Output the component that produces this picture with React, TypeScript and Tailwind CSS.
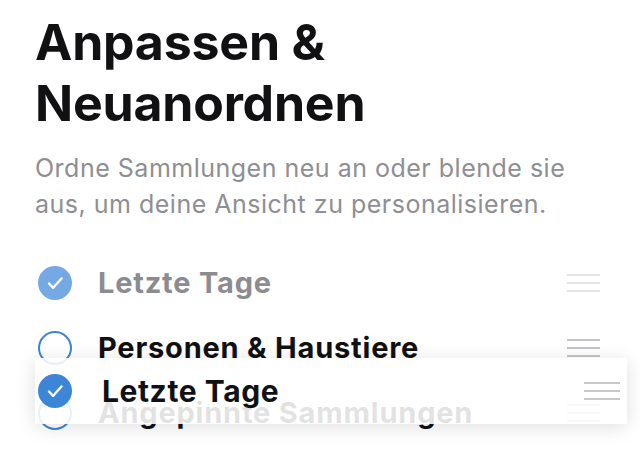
function Check({ faded }: { faded?: boolean }) {
  return (
    <span
      className={`flex h-[34px] w-[34px] shrink-0 items-center justify-center rounded-full ${
        faded ? "bg-[#74a9e4]" : "bg-[#3d85d6]"
      }`}
    >
      <svg viewBox="0 0 34 34" className="h-[34px] w-[34px]">
        <path d="M11 17.5 L15.2 21.8 L23.5 12.5" fill="none" stroke="white" strokeWidth="2.4" strokeLinecap="round" strokeLinejoin="round" />
      </svg>
    </span>
  );
}

function Ring() {
  return <span className="h-[34px] w-[34px] shrink-0 rounded-full border-[2.5px] border-[#3d85d6]" />;
}

function Handle({ tone, wide }: { tone: string; wide?: boolean }) {
  return (
    <div className={`ml-auto flex flex-col gap-[6px] ${wide ? "w-[36px]" : "w-[33px]"}`}>
      <span className={`h-[2px] w-full ${tone}`} />
      <span className={`h-[2px] w-full ${tone}`} />
      <span className={`h-[2px] w-full ${tone}`} />
    </div>
  );
}

export default function App() {
  return (
    <div className="relative h-[450px] w-[640px] overflow-hidden bg-white pl-[35px] pr-[40px] pt-[12px] [font-family:Inter,sans-serif]">
      <h1 className="text-[50px] font-bold leading-[61px] tracking-[-0.2px] text-[#111113]">
        Anpassen &amp;
        <br />
        Neuanordnen
      </h1>
      <p className="mt-[16px] w-[550px] text-[25px] leading-[36px] tracking-[0.5px] text-[#8e8e93]">
        Ordne Sammlungen neu an oder blende sie aus, um deine Ansicht zu personalisieren.
      </p>

      <ul className="mt-[28px]">
        <li className="flex h-[65px] items-center">
          <span className="ml-[3px]">
            <Check faded />
          </span>
          <span className="ml-[26px] text-[29px] font-bold tracking-[0.8px] text-[#8c8c90]">Letzte Tage</span>
          <Handle tone="bg-[#e4e4e7]" />
        </li>
        <li className="flex h-[65px] items-center">
          <span className="ml-[3px] flex">
            <Ring />
          </span>
          <span className="ml-[26px] text-[29px] font-bold tracking-[0.8px] text-[#111113]">Personen &amp; Haustiere</span>
          <Handle tone="bg-[#c4c4c8]" />
        </li>
        <li className="flex h-[65px] items-center">
          <span className="ml-[3px] flex">
            <Ring />
          </span>
          <span className="ml-[26px] text-[29px] font-bold tracking-[0.8px] text-[#111113]">Angepinnte Sammlungen</span>
          <Handle tone="bg-[#c4c4c8]" />
        </li>
      </ul>

      {/* dragged row floating over the list */}
      <div className="absolute left-[35px] top-[358px] flex h-[66px] w-[592px] items-center bg-white/[0.88] pr-[7px] shadow-[0_3px_18px_rgba(0,0,0,0.13)]">
        <span className="ml-[3px]">
          <Check />
        </span>
        <span className="ml-[30px] text-[30px] font-bold tracking-[0.6px] text-[#111113]">Letzte Tage</span>
        <Handle tone="bg-[#c7c7cc]" wide />
      </div>
    </div>
  );
}
